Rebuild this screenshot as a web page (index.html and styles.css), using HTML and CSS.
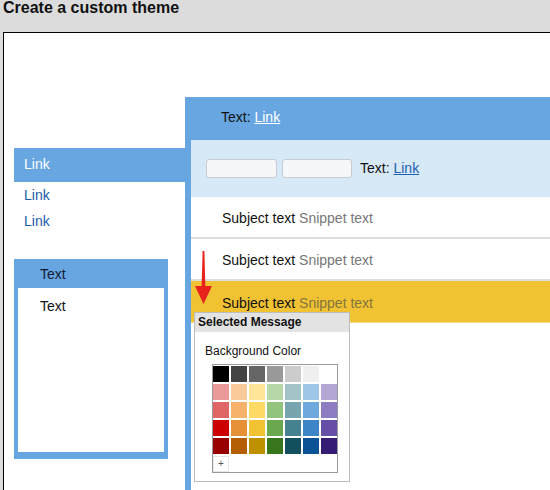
FILE: index.html
```html
<!DOCTYPE html>
<html>
<head>
<meta charset="utf-8">
<link rel="stylesheet" href="styles.css">
</head>
<body>
<h1 class="title">Create a custom theme</h1>
<div class="frame">
  <div class="side">
    <div class="nav-head">Link</div>
    <a class="nav-link">Link</a>
    <a class="nav-link">Link</a>
    <div class="box">
      <div class="box-head">Text</div>
      <div class="box-body">Text</div>
    </div>
  </div>
  <div class="main">
    <div class="main-head">Text: <a class="head-link">Link</a></div>
    <div class="main-body">
      <div class="toolbar">
        <span class="input"></span>
        <span class="input input-b"></span>
        <span class="tool-text">Text: <a class="tool-link">Link</a></span>
      </div>
      <div class="row"><span class="subject">Subject text</span>&nbsp;<span class="snippet">Snippet text</span></div>
      <div class="row"><span class="subject">Subject text</span>&nbsp;<span class="snippet">Snippet text</span></div>
      <div class="row row-selected"><span class="subject">Subject text</span>&nbsp;<span class="snippet">Snippet text</span></div>
    </div>
  </div>
  <svg class="arrow" width="17" height="53" viewBox="0 0 17 53">
    <polygon points="7.6,0 9.4,0 10.4,37 6.6,37" fill="#e8231c"/>
    <polygon points="0,35 17,35 8.5,53" fill="#e8231c"/>
  </svg>
  <div class="popup">
    <div class="popup-head">Selected Message</div>
    <div class="popup-label">Background Color</div>
    <div class="palette">
      <span class="sw" style="background:#000000"></span>
      <span class="sw" style="background:#434343"></span>
      <span class="sw" style="background:#666666"></span>
      <span class="sw" style="background:#999999"></span>
      <span class="sw" style="background:#cccccc"></span>
      <span class="sw" style="background:#efefef"></span>
      <span class="sw" style="background:#ffffff"></span>
      <span class="sw" style="background:#ea9999"></span>
      <span class="sw" style="background:#f9cb9c"></span>
      <span class="sw" style="background:#ffe599"></span>
      <span class="sw" style="background:#b6d7a8"></span>
      <span class="sw" style="background:#a2c4c9"></span>
      <span class="sw" style="background:#9fc5e8"></span>
      <span class="sw" style="background:#b4a7d6"></span>
      <span class="sw" style="background:#e06666"></span>
      <span class="sw" style="background:#f6b26b"></span>
      <span class="sw" style="background:#ffd966"></span>
      <span class="sw" style="background:#93c47d"></span>
      <span class="sw" style="background:#76a5af"></span>
      <span class="sw" style="background:#6fa8dc"></span>
      <span class="sw" style="background:#8e7cc3"></span>
      <span class="sw" style="background:#cc0000"></span>
      <span class="sw" style="background:#e69138"></span>
      <span class="sw" style="background:#f1c232"></span>
      <span class="sw" style="background:#6aa84f"></span>
      <span class="sw" style="background:#45818e"></span>
      <span class="sw" style="background:#3d85c6"></span>
      <span class="sw" style="background:#674ea7"></span>
      <span class="sw" style="background:#990000"></span>
      <span class="sw" style="background:#b45f06"></span>
      <span class="sw" style="background:#bf9000"></span>
      <span class="sw" style="background:#38761d"></span>
      <span class="sw" style="background:#134f5c"></span>
      <span class="sw" style="background:#0b5394"></span>
      <span class="sw" style="background:#351c75"></span>
      <span class="plus">+</span>
    </div>
  </div>
</div>
</body>
</html>
```
FILE: styles.css
```css
html, body {
  margin: 0;
  padding: 0;
}
body {
  background: #dcdcdc;
  font-family: "Liberation Sans", Arial, sans-serif;
  color: #111;
  width: 550px;
  height: 490px;
  overflow: hidden;
}
.title {
  margin: 0;
  padding-left: 3px;
  font-size: 16px;
  line-height: 16px;
  font-weight: bold;
  color: #111;
  height: 16px;
}
.frame {
  margin-top: 16px;
  margin-left: 3px;
  width: 547px;
  height: 458px;
  box-sizing: border-box;
  border-top: 1px solid #000;
  border-left: 1px solid #000;
  background: #fff;
  display: flex;
  align-items: flex-start;
  position: relative;
  overflow: hidden;
  font-size: 14px;
}
.side {
  margin-left: 10px;
  margin-top: 115px;
  width: 171px;
  flex: none;
}
.nav-head {
  height: 34px;
  line-height: 33px;
  padding-left: 10px;
  background: #67a6e1;
  color: #fff;
}
.nav-link {
  display: block;
  height: 26px;
  line-height: 26px;
  padding-left: 10px;
  color: #1b5bab;
}
.box {
  margin-top: 25px;
  width: 154px;
  box-sizing: border-box;
  background: #67a6e1;
  padding: 0 4px 7px;
}
.box-head {
  height: 29px;
  line-height: 30px;
  padding-left: 22px;
  color: #111a33;
}
.box-body {
  background: #fff;
  height: 164px;
  box-sizing: border-box;
  padding: 10px 22px;
  line-height: 16px;
}
.main {
  margin-top: 64px;
  flex: 1;
}
.main-head {
  height: 43px;
  line-height: 40px;
  padding-left: 36px;
  background: #67a6e1;
  color: #111;
}
.head-link {
  color: #fff;
  text-decoration: underline;
}
.main-body {
  border-left: 6px solid #67a6e1;
  height: 350px;
}
.toolbar {
  height: 57px;
  background: #d7e8f7;
  display: flex;
  align-items: center;
  padding-left: 15px;
  padding-bottom: 1px;
  box-sizing: border-box;
}
.input {
  width: 71px;
  height: 19px;
  box-sizing: border-box;
  border: 1px solid #c6ccd2;
  border-radius: 3px;
  background: #f6f7f8;
}
.input-b {
  margin-left: 5px;
  width: 70px;
}
.tool-text {
  margin-left: 8px;
}
.tool-link {
  color: #1d5fb0;
  text-decoration: underline;
}
.row {
  height: 42px;
  box-sizing: border-box;
  border-bottom: 2px solid #dedede;
  padding-left: 31px;
  padding-top: 2px;
  display: flex;
  align-items: center;
  white-space: nowrap;
}
.subject {
  color: #111;
}
.snippet {
  color: #777;
}
.row-selected {
  background: #f1c232;
  border-bottom: 1px solid #f6dc8e;
  height: 42px;
}
.row-selected .snippet {
  color: #85763f;
}
.arrow {
  position: absolute;
  left: 191px;
  top: 218px;
}
.popup {
  position: absolute;
  left: 190px;
  top: 279px;
  width: 156px;
  height: 170px;
  box-sizing: border-box;
  border: 1px solid #bdbdbd;
  background: #fff;
}
.popup-head {
  height: 19px;
  line-height: 19px;
  background: #e3e3e3;
  padding-left: 3px;
  font-size: 12px;
  font-weight: bold;
  color: #111;
}
.popup-label {
  margin-top: 11px;
  padding-left: 10px;
  font-size: 12px;
  line-height: 16px;
  color: #111;
}
.palette {
  margin-top: 5px;
  margin-left: 17px;
  width: 126px;
  box-sizing: border-box;
  border: 1px solid #9a9a9a;
  padding-top: 1px;
  display: grid;
  grid-template-columns: repeat(7, 16px);
  grid-auto-rows: 16px;
  gap: 2px;
}
.sw {
  display: block;
}
.plus {
  box-sizing: border-box;
  border: 1px solid #e6e6e6;
  font-size: 10px;
  line-height: 14px;
  text-align: center;
  color: #555;
}
```
